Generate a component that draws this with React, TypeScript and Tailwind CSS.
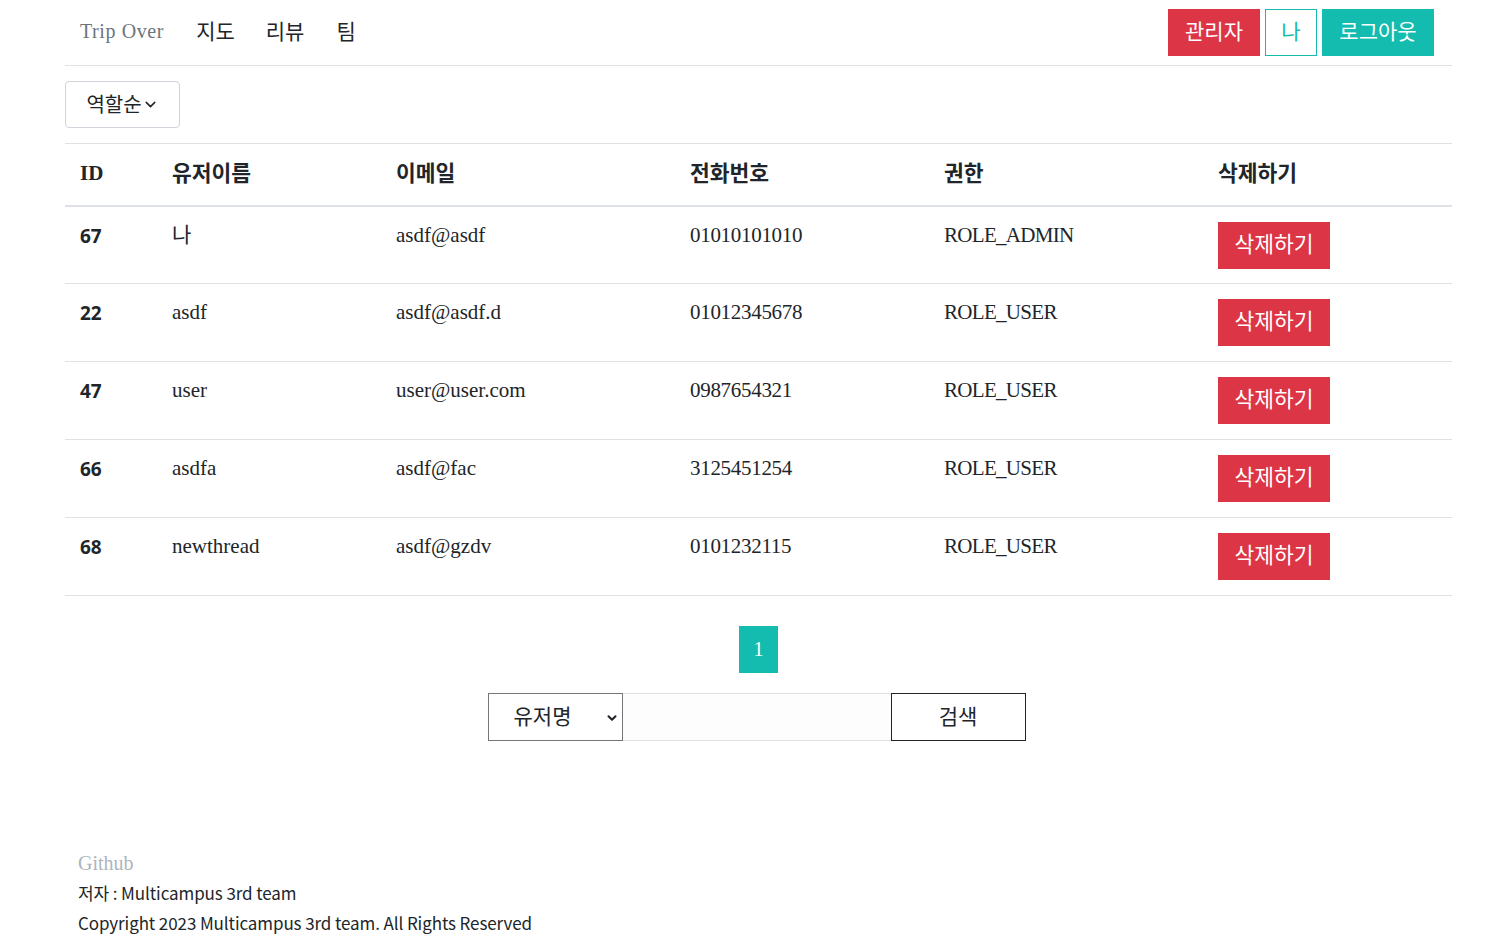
import { ChevronDown } from 'lucide-react';

const users = [
  { id: 67, name: '나', email: 'asdf@asdf', phone: '01010101010', role: 'ROLE_ADMIN' },
  { id: 22, name: 'asdf', email: 'asdf@asdf.d', phone: '01012345678', role: 'ROLE_USER' },
  { id: 47, name: 'user', email: 'user@user.com', phone: '0987654321', role: 'ROLE_USER' },
  { id: 66, name: 'asdfa', email: 'asdf@fac', phone: '3125451254', role: 'ROLE_USER' },
  { id: 68, name: 'newthread', email: 'asdf@gzdv', phone: '0101232115', role: 'ROLE_USER' },
];

const serif = "font-['Liberation_Serif','Noto_Sans_CJK_KR',serif]";
const kr = "font-['Noto_Sans_CJK_KR',sans-serif]";

const App = () => {
  return (
    <div className={`min-h-screen bg-white text-[#212529] ${serif}`}>
      <div className="ml-[65px] w-[1387px]">
        {/* navbar */}
        <nav className="flex items-center justify-between h-[66px] border-b border-[#dee2e6] pl-[15px] pr-[18px]">
          <div className="flex items-center text-[20px] pb-[3px]">
            <span className="text-[#6c757d] tracking-[0.6px]">Trip Over</span>
            <span className={`ml-[32px] ${kr} text-[21px]`}>지도</span>
            <span className={`ml-[31px] ${kr} text-[21px]`}>리뷰</span>
            <span className={`ml-[32px] ${kr} text-[21px]`}>팀</span>
          </div>
          <div className={`flex items-center gap-[5px] ${kr} text-[21px]`}>
            <button className="h-[47px] w-[92px] pb-[3px] bg-[#dc3545] text-white">관리자</button>
            <button className="h-[47px] w-[52px] pb-[3px] border border-[#13bcae] text-[#13bcae] bg-white">나</button>
            <button className="h-[47px] w-[112px] pb-[3px] bg-[#13bcae] text-white">로그아웃</button>
          </div>
        </nav>

        {/* sort dropdown */}
        <div className="pt-[15px] pb-[15px]">
          <button className={`flex items-center justify-center h-[47px] w-[115px] pb-[2px] border border-[#ced4da] rounded-[4px] ${kr} text-[20px]`}>
            역할순
            <ChevronDown size={17} strokeWidth={2.2} className="mt-[2px]" />
          </button>
        </div>

        {/* table */}
        <table className="w-full border-collapse border-t border-[#dee2e6] text-[21px]">
          <thead>
            <tr className="h-[62px] border-b-2 border-[#dee2e6] font-bold text-left">
              <th className="w-[92px] pl-[15px] pb-[2px]">ID</th>
              <th className={`w-[224px] pl-[15px] pb-[5px] ${kr} text-[21.5px]`}>유저이름</th>
              <th className={`w-[294px] pl-[15px] pb-[5px] ${kr} text-[21.5px]`}>이메일</th>
              <th className={`w-[254px] pl-[15px] pb-[5px] ${kr} text-[21.5px]`}>전화번호</th>
              <th className={`w-[274px] pl-[15px] pb-[5px] ${kr} text-[21.5px]`}>권한</th>
              <th className={`pl-[15px] pb-[5px] ${kr} text-[21.5px]`}>삭제하기</th>
            </tr>
          </thead>
          <tbody>
            {users.map((u) => (
              <tr key={u.id} className="h-[78px] border-b border-[#dee2e6] align-top">
                <td className="pl-[15px] pt-[15px] font-['Noto_Sans',sans-serif] font-bold text-[19px] leading-[28px]">{u.id}</td>
                <td className="pl-[15px] pt-[14px] leading-[28px]">{u.name}</td>
                <td className="pl-[15px] pt-[14px] leading-[28px]">{u.email}</td>
                <td className="pl-[15px] pt-[14px] leading-[28px] tracking-[-0.3px]">{u.phone}</td>
                <td className="pl-[15px] pt-[14px] leading-[28px] tracking-[-0.7px]">{u.role}</td>
                <td className="pl-[15px] pt-[15px]">
                  <button className={`h-[47px] w-[112px] pb-[4px] bg-[#dc3545] text-white ${kr} text-[21.5px]`}>
                    삭제하기
                  </button>
                </td>
              </tr>
            ))}
          </tbody>
        </table>

        {/* pagination */}
        <div className="flex justify-center mt-[30px]">
          <span className="flex items-center justify-center h-[47px] w-[39px] pb-[2px] bg-[#13bcae] text-white text-[20px]">1</span>
        </div>

        {/* search */}
        <div className={`flex justify-center mt-[20px] pr-[4px] ${kr}`}>
          <div className="relative h-[48px] w-[135px] border border-[#767676] flex items-center">
            <span className="pl-[25px] pb-[3px] text-[21px]">유저명</span>
            <ChevronDown size={14} strokeWidth={3.5} className="absolute right-[3px] top-[17px]" />
          </div>
          <input className="h-[48px] w-[268px] border-y border-[#dee2e6] bg-[#fdfdfd] outline-none" />
          <button className="h-[48px] w-[135px] pb-[3px] border border-[#212529] text-[21px]">검색</button>
        </div>

        {/* footer */}
        <footer className={`mt-[107px] pl-[13px] ${kr} text-[17px] tracking-[-0.1px] leading-[30px]`}>
          <div className={`${serif} text-[20px] text-[#adb5bd] tracking-normal`}>Github</div>
          <div>저자 : Multicampus 3rd team</div>
          <div>Copyright 2023 Multicampus 3rd team. All Rights Reserved</div>
        </footer>
      </div>
    </div>
  );
};

export default App;
